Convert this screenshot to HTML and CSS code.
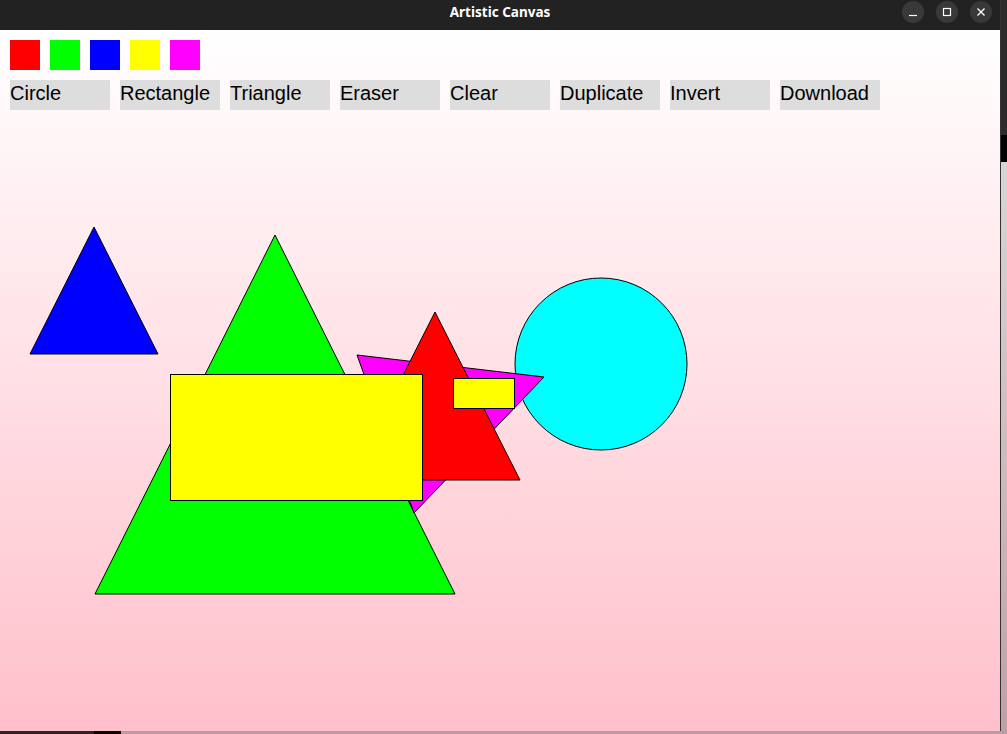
FILE: index.html
```html
<!DOCTYPE html>
<html>
<head>
<meta charset="utf-8">
<title>Artistic Canvas</title>
<link rel="stylesheet" href="styles.css">
</head>
<body>
<div class="screen">
  <div class="top-row">
    <div class="window">
      <div class="titlebar">
        <div class="tb-spacer"></div>
        <div class="tb-title">Artistic Canvas</div>
        <div class="tb-controls">
          <span class="tb-btn"><svg width="22" height="22" viewBox="0 0 22 22"><line x1="7" y1="14.5" x2="15" y2="14.5" stroke="#fff" stroke-width="1.2"/></svg></span>
          <span class="tb-btn"><svg width="22" height="22" viewBox="0 0 22 22"><rect x="7.5" y="7.5" width="7" height="7" fill="none" stroke="#fff" stroke-width="1.2"/></svg></span>
          <span class="tb-btn"><svg width="22" height="22" viewBox="0 0 22 22"><path d="M7.5 7.5 L14.5 14.5 M14.5 7.5 L7.5 14.5" stroke="#fff" stroke-width="1.3"/></svg></span>
        </div>
      </div>
      <div class="content">
        <svg class="canvas" width="1000" height="700" viewBox="0 0 1000 700">
          <g stroke="#000" stroke-width="1">
            <polygon points="94,197 30,324 158,324" fill="#0000ff"/>
            <polygon points="275,205 95,564 455,564" fill="#00ff00"/>
            <circle cx="601" cy="334" r="86" fill="#00ffff"/>
            <polygon points="357,325 544,347 414,483" fill="#ff00ff"/>
            <polygon points="435,282 520,450 350,450" fill="#ff0000"/>
            <rect x="170.5" y="344.5" width="252" height="126" fill="#ffff00"/>
            <rect x="453.5" y="348.5" width="61" height="30" fill="#ffff00"/>
          </g>
        </svg>
        <div class="toolbar">
          <div class="swatches">
            <span class="swatch red"></span>
            <span class="swatch green"></span>
            <span class="swatch blue"></span>
            <span class="swatch yellow"></span>
            <span class="swatch magenta"></span>
          </div>
          <div class="tools">
            <span class="tool">Circle</span>
            <span class="tool">Rectangle</span>
            <span class="tool">Triangle</span>
            <span class="tool">Eraser</span>
            <span class="tool">Clear</span>
            <span class="tool">Duplicate</span>
            <span class="tool">Invert</span>
            <span class="tool">Download</span>
          </div>
        </div>
      </div>
    </div>
    <div class="right-strip">
      <div class="rs-dark"></div>
      <div class="rs-black"></div>
      <div class="rs-light"></div>
    </div>
  </div>
  <div class="bottom-strip">
    <div class="bs-dark"></div>
    <div class="bs-black"></div>
    <div class="bs-pink"></div>
  </div>
</div>
</body>
</html>
```

FILE: styles.css
```css
html, body {
  margin: 0;
  padding: 0;
}
body {
  width: 1007px;
  height: 734px;
  overflow: hidden;
  background: #2a2a2a;
}
.screen {
  display: flex;
  flex-direction: column;
  width: 1007px;
  height: 734px;
}
.top-row {
  display: flex;
  height: 731px;
}
.window {
  width: 1000px;
  height: 731px;
  border-right: 1px solid #333;
  border-bottom: 1px solid #333;
  box-sizing: content-box;
  display: flex;
  flex-direction: column;
}
.titlebar {
  height: 30px;
  background: #222222;
  display: grid;
  grid-template-columns: 1fr auto 1fr;
  align-items: center;
}
.tb-title {
  color: #ffffff;
  font-family: "Noto Sans", "DejaVu Sans", sans-serif;
  font-weight: bold;
  font-size: 13.5px;
  line-height: 24px;
  padding-bottom: 6px;
}
.tb-controls {
  display: flex;
  justify-content: flex-end;
  gap: 12px;
  padding-right: 8px;
  align-self: start;
  padding-top: 1px;
}
.tb-btn {
  width: 22px;
  height: 22px;
  border-radius: 50%;
  background: #393939;
  display: flex;
}
.content {
  position: relative;
  flex: 1;
  background: linear-gradient(to bottom, #ffffff 0%, #ffc0cb 100%);
  overflow: hidden;
}
.canvas {
  position: absolute;
  left: 0;
  top: 0;
}
.toolbar {
  position: relative;
  padding: 10px 0 0 10px;
  display: flex;
  flex-direction: column;
  gap: 10px;
}
.swatches {
  display: flex;
  gap: 10px;
}
.swatch {
  width: 30px;
  height: 30px;
  display: block;
}
.red { background: #ff0000; }
.green { background: #00ff00; }
.blue { background: #0000ff; }
.yellow { background: #ffff00; }
.magenta { background: #ff00ff; }
.tools {
  display: flex;
  gap: 10px;
}
.tool {
  width: 100px;
  height: 30px;
  box-sizing: border-box;
  padding: 2px 0 0 0;
  background: #dddddd;
  color: #000;
  font-family: "Liberation Sans", Arial, sans-serif;
  font-size: 20px;
  line-height: 23px;
  white-space: nowrap;
}
.right-strip {
  flex: 1;
  display: flex;
  flex-direction: column;
}
.rs-dark {
  height: 135px;
  background: #2c2c2c;
}
.rs-black {
  height: 27px;
  background: #000;
}
.rs-light {
  flex: 1;
  background: linear-gradient(to bottom, #d6d6d6 0%, #cdb6bc 60%, #bfa0a8 100%);
}
.bottom-strip {
  flex: 1;
  display: flex;
}
.bs-dark {
  width: 94px;
  background: #262626;
}
.bs-black {
  width: 27px;
  background: #000;
}
.bs-pink {
  flex: 1;
  background: #b99ca4;
}
```
